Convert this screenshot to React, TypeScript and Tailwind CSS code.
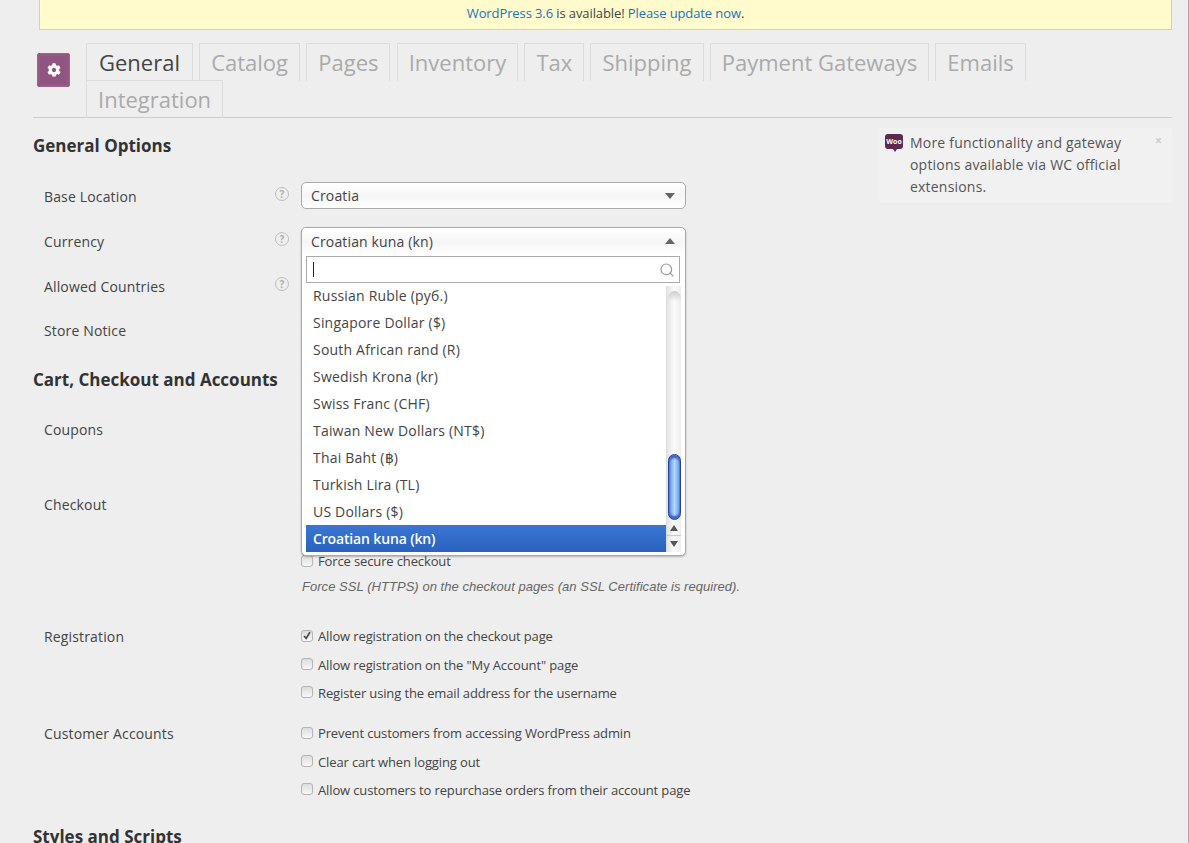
import React from "react";
import { Search } from "lucide-react";
import { FaCog } from "react-icons/fa";

const tabs = ["General", "Catalog", "Pages", "Inventory", "Tax", "Shipping", "Payment Gateways", "Emails", "Integration"];
const options = [
  "Russian Ruble (руб.)",
  "Singapore Dollar ($)",
  "South African rand (R)",
  "Swedish Krona (kr)",
  "Swiss Franc (CHF)",
  "Taiwan New Dollars (NT$)",
  "Thai Baht (฿)",
  "Turkish Lira (TL)",
  "US Dollars ($)",
];

function Help() {
  return (
    <span className="flex h-[14px] w-[14px] items-center justify-center rounded-full border-[1.5px] border-[#bdbdbd] text-[10px] font-bold leading-none text-[#b0b0b0]">?</span>
  );
}

function Check({ label, checked, className }: { label: string; checked?: boolean; className?: string }) {
  return (
    <div className={`flex h-[20px] items-center text-[13px] tracking-[-0.13px] text-[#444] ${className ?? ""}`}>
      <span className="mr-[5px] mt-[-3px] flex h-[12px] w-[12px] items-center justify-center rounded-[3px] border border-[#b4b4b4] bg-gradient-to-b from-[#dcdcdc] to-[#f8f8f8]">
        {checked && (
          <svg viewBox="0 0 12 12" className="h-[11px] w-[11px]">
            <path d="M2.5 6.5 5 9.5 9.5 2" fill="none" stroke="#444" strokeWidth="2" />
          </svg>
        )}
      </span>
      {label}
    </div>
  );
}

function Row({ label, help, pt, height, children }: { label: string; help?: boolean; pt: string; height?: string; children?: React.ReactNode }) {
  return (
    <div className={`flex pl-[11px] ${height ?? ""}`}>
      <div className={`w-[231px] text-[14px] leading-[20px] tracking-[0.15px] text-[#444] ${pt}`}>{label}</div>
      <div className="w-[26px] pt-[5px]">{help && <Help />}</div>
      <div className="flex-1">{children}</div>
    </div>
  );
}

function Scrollbar() {
  return (
    <div className="flex w-[15px] shrink-0 flex-col border-l border-[#ddd] bg-gradient-to-r from-[#e4e4e4] via-[#fafafa] to-[#eee]">
      <div className="mx-auto mt-[5px] h-[10px] w-[13px] rounded-t-full bg-gradient-to-b from-[#ccc] to-transparent" />
      <div className="flex-1" />
      <div className="mx-auto h-[66px] w-[13px] rounded-full border border-[#2a3f9e] bg-gradient-to-r from-[#5d93e6] via-[#b4d7fb] to-[#5f9bec] shadow-[inset_0_3px_2px_#3f62c4,inset_0_-3px_2px_#3f62c4]" />
      <div className="flex h-[16px] items-center justify-center border-b border-[#ccc] text-[#555]">
        <span className="h-0 w-0 border-x-[4px] border-b-[6px] border-x-transparent border-b-[#555]" />
      </div>
      <div className="flex h-[16px] items-center justify-center">
        <span className="h-0 w-0 border-x-[4px] border-t-[6px] border-x-transparent border-t-[#555]" />
      </div>
    </div>
  );
}

function CurrencyDropdown() {
  return (
    <div className="absolute left-0 top-0 z-10 h-[329px] w-[385px] rounded-[5px] border border-[#aaa] bg-white shadow-[0_1px_2px_rgba(0,0,0,0.25)]">
      <div className="flex h-[28px] items-center justify-between rounded-t-[5px] bg-gradient-to-b from-[#fff] via-[#f6f6f6] to-white px-[9px] pb-[2px] text-[14px] tracking-[0.15px] text-[#444]">
        <span>Croatian kuna (kn)</span>
        <span className="mr-[1px] h-0 w-0 border-x-[5px] border-b-[6px] border-x-transparent border-b-[#666]" />
      </div>
      <div className="mx-[4px] flex h-[27px] w-[374px] items-center justify-between border border-[#aaa] pl-[6px] pr-[4px]">
        <span className="h-[15px] w-px bg-[#222]" />
        <Search size={16} strokeWidth={1.75} className="text-[#999]" />
      </div>
      <div className="ml-[4px] mt-[3px] flex h-[266px] w-[375px]">
        <div className="flex-1 overflow-hidden">
          <div className="mt-[-4px]">
            {options.map((o) => (
              <div key={o} className="flex h-[27px] items-center px-[7px] text-[14px] tracking-[0.2px] text-[#444]">{o}</div>
            ))}
            <div className="flex h-[27px] items-center bg-gradient-to-b from-[#3b76d6] to-[#2a62bc] px-[7px] text-[14px] font-semibold tracking-[-0.15px] text-white">Croatian kuna (kn)</div>
          </div>
        </div>
        <Scrollbar />
      </div>
    </div>
  );
}

export default function App() {
  return (
    <div className="h-[843px] w-[1189px] overflow-hidden border-r border-[#aaa] bg-[#eeeeee] font-['Open_Sans',sans-serif]">
      <div className="ml-[39px] flex h-[30px] w-[1133px] items-center justify-center border-x border-b border-[#e6db55] bg-[#fffbcc] pb-[2px] text-[13px] tracking-[-0.1px] text-[#444]">
        <a className="text-[#1a73c0]">WordPress 3.6</a>
        <span className="whitespace-pre"> is available! </span>
        <a className="text-[#1a73c0]">Please update now</a>.
      </div>

      <div className="ml-[33px] w-[1139px]">
        <div className="flex border-b border-[#ccc] pt-[13px]">
          <div className="ml-[4px] mt-[10px] flex h-[34px] w-[33px] items-center justify-center rounded-[2px] border border-[#a0628f] bg-[#8f5580] text-white shadow-[inset_0_0_0_2px_#96587f]">
            <FaCog size={14} />
          </div>
          <div className="ml-[16px] flex w-[1000px] flex-wrap gap-x-[6.2px]">
            {tabs.map((t, i) => (
              <div key={t} className={`mb-[-1px] h-[38px] border-x border-t border-[#dcdcdc] text-[22px] leading-[36px] ${i === 0 ? "px-[12px] text-[#444]" : "px-[11px] text-[#aaa]"}`}>
                {t}
              </div>
            ))}
          </div>
        </div>

        <aside className="float-right mt-[10px] h-[75px] w-[293px] rounded-[4px] bg-[#f1f1f1] pl-[31px] pr-[30px] pt-[4px] text-[14px] leading-[22px] tracking-[0.2px] text-[#555]">
          <div className="relative">
            <div className="absolute left-[-25px] top-[2px] flex h-[15px] w-[18px] items-center justify-center rounded-[3px] bg-[#5b2b50] text-[7px] font-bold leading-none tracking-normal text-white">
              Woo
              <span className="absolute bottom-[-3px] left-[8px] h-0 w-0 border-x-[2px] border-t-[3px] border-x-transparent border-t-[#5b2b50]" />
            </div>
            <span className="absolute right-[-20px] top-[-2px] text-[12px] font-bold text-[#ccc]">×</span>
            More functionality and gateway options available via WC official extensions.
          </div>
        </aside>

        <h2 className="mt-[17px] h-[22px] text-[17px] font-bold leading-[22px] text-[#333]">General Options</h2>
        <div className="mt-[25px]">
          <Row label="Base Location" help pt="pt-[5px]" height="h-[45px]">
            <div className="flex h-[27px] w-[385px] items-center justify-between rounded-[5px] border border-[#aaa] bg-gradient-to-b from-white via-[#f6f6f6] to-white px-[9px] text-[14px] tracking-[0.15px] text-[#444]">
              <span>Croatia</span>
              <span className="mr-[1px] h-0 w-0 border-x-[5px] border-t-[6px] border-x-transparent border-t-[#666]" />
            </div>
          </Row>
          <Row label="Currency" help pt="pt-[5px]" height="h-[45px]">
            <div className="relative">
              <CurrencyDropdown />
            </div>
          </Row>
          <Row label="Allowed Countries" help pt="pt-[5px]" height="h-[45px]" />
          <Row label="Store Notice" pt="pt-[4px]" height="h-[45px]" />
        </div>

        <h2 className="mt-[7px] h-[22px] text-[17px] font-bold leading-[22px] text-[#333]">Cart, Checkout and Accounts</h2>
        <div className="mt-[25px]">
          <Row label="Coupons" pt="pt-[4px]" height="h-[75px]" />
          <Row label="Checkout" pt="pt-[4px]" height="h-[131px]">
            <div className="pt-[61px]">
              <Check label="Force secure checkout" />
              <p className="mt-[5px] pl-[1px] font-['Liberation_Sans',sans-serif] text-[13px] italic leading-[20px] tracking-[0.04px] text-[#666]">
                Force SSL (HTTPS) on the checkout pages (an SSL Certificate is required).
              </p>
            </div>
          </Row>
          <Row label="Registration" pt="pt-[5px]" height="h-[97px]">
            <div className="flex flex-col gap-[8.25px] pt-[5px]">
              <Check checked label="Allow registration on the checkout page" />
              <Check label={'Allow registration on the "My Account" page'} />
              <Check label="Register using the email address for the username" />
            </div>
          </Row>
          <Row label="Customer Accounts" pt="pt-[5px]" height="h-[97px]">
            <div className="flex flex-col gap-[8.25px] pt-[5px]">
              <Check label="Prevent customers from accessing WordPress admin" />
              <Check label="Clear cart when logging out" />
              <Check label="Allow customers to repurchase orders from their account page" />
            </div>
          </Row>
        </div>
        <h2 className="mt-[10px] h-[22px] text-[17px] font-bold leading-[22px] text-[#333]">Styles and Scripts</h2>
      </div>
    </div>
  );
}
